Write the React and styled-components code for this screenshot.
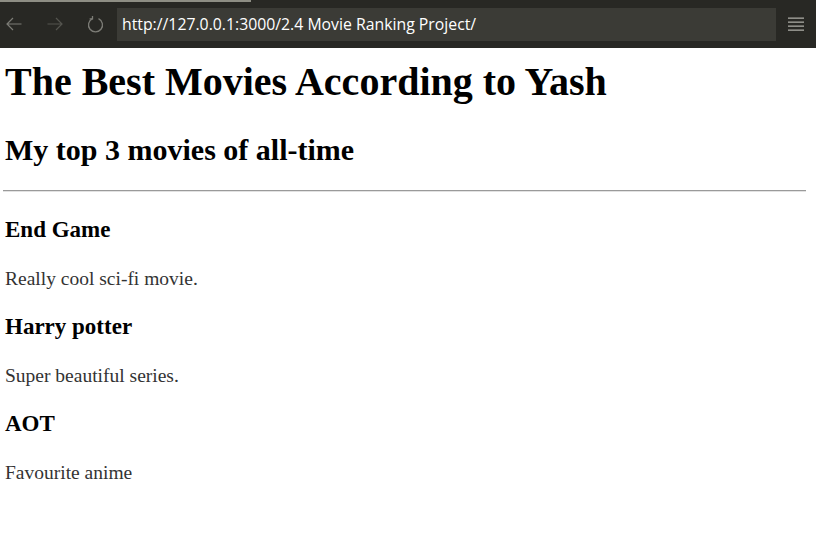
import React from 'react'
import styled, {createGlobalStyle} from 'styled-components'

const GlobalStyle = createGlobalStyle`
  html, body {
    margin: 0;
    padding: 0;
    background: #fff;
  }
`;

const Toolbar = styled.div`
  position: relative;
  display: flex;
  align-items: center;
  height: 48px;
  padding: 0 0 0 5px;
  background: #282824;
  box-sizing: border-box;
`;

const Progress = styled.div`
  position: absolute;
  top: 0;
  left: 0;
  width: 251px;
  height: 2px;
  background: #8e8e84;
`;

const NavGroup = styled.div`
  display: flex;
  align-items: center;
  gap: 24px;
  margin-right: 13px;
`;

const NavButton = styled.button`
  display: flex;
  align-items: center;
  justify-content: center;
  width: 17px;
  height: 20px;
  padding: 0;
  border: none;
  background: none;
  color: ${props => props.dim ? '#55554f' : '#7c7c76'};
`;

const UrlBar = styled.div`
  flex: 1;
  display: flex;
  align-items: center;
  height: 33px;
  padding-left: 5px;
  background: #3b3b36;
  color: #fff;
  font-family: "Open Sans", sans-serif;
  font-size: 15.8px;
  white-space: nowrap;
`;

const MenuButton = styled.div`
  display: flex;
  align-items: center;
  justify-content: center;
  width: 40px;
  height: 33px;
`;

const Page = styled.main`
  padding: 0 5px;
  font-family: "Liberation Serif", serif;
  color: #000;
`;

const Title = styled.h1`
  margin: 0;
  padding-top: 11px;
  font-size: 40px;
  line-height: 46px;
  font-weight: 700;
`;

const Subtitle = styled.h2`
  margin: 28px 0 0;
  font-size: 30px;
  line-height: 34px;
  font-weight: 700;
`;

const Rule = styled.hr`
  margin: 23px 5px 0 -2px;
  border: none;
  border-top: 1px solid #9a9a9a;
  border-bottom: 1px solid #e2e2e2;
`;

const Movie = styled.section`
  margin-top: ${props => props.first ? '25px' : '0'};
`;

const MovieName = styled.h3`
  margin: 0;
  font-size: 23px;
  line-height: 26px;
  font-weight: 700;
`;

const MovieNote = styled.p`
  margin: 24px 0 23px;
  font-size: 19.5px;
  line-height: 24px;
  color: #333;
`;

const movies = [
    {name: 'End Game', note: 'Really cool sci-fi movie.'},
    {name: 'Harry potter', note: 'Super beautiful series.'},
    {name: 'AOT', note: 'Favourite anime'}
]

const BackIcon = () => (
    <svg width="16" height="14" viewBox="0 0 16 14" fill="none" stroke="currentColor" strokeWidth="1.2">
        <path d="M15.5 7H1M7 1L1 7l6 6"/>
    </svg>
)

const ForwardIcon = () => (
    <svg width="16" height="14" viewBox="0 0 16 14" fill="none" stroke="currentColor" strokeWidth="1.2">
        <path d="M0.5 7H15M9 1l6 6-6 6"/>
    </svg>
)

const ReloadIcon = () => (
    <svg width="17" height="18" viewBox="0 0 17 18" fill="none" stroke="currentColor" strokeWidth="1.3">
        <path d="M11.5 3.6A7 7 0 1 1 5.5 3.6"/>
        <path d="M5.5 1v2.8H2.6"/>
    </svg>
)

const MenuIcon = () => (
    <svg width="16" height="14" viewBox="0 0 16 14">
        <rect x="0" y="0.5" width="16" height="1.3" fill="#a9a8a1"/>
        <rect x="0" y="4.5" width="16" height="1.3" fill="#a9a8a1"/>
        <rect x="0" y="8.5" width="16" height="1.3" fill="#a9a8a1"/>
        <rect x="0" y="12.5" width="16" height="1.3" fill="#a9a8a1"/>
    </svg>
)

export default function App() {
    return (
        <>
            <GlobalStyle/>
            <Toolbar>
                <Progress/>
                <NavGroup>
                    <NavButton><BackIcon/></NavButton>
                    <NavButton dim><ForwardIcon/></NavButton>
                    <NavButton><ReloadIcon/></NavButton>
                </NavGroup>
                <UrlBar>http://127.0.0.1:3000/2.4 Movie Ranking Project/</UrlBar>
                <MenuButton><MenuIcon/></MenuButton>
            </Toolbar>
            <Page>
                <Title>The Best Movies According to Yash</Title>
                <Subtitle>My top 3 movies of all-time</Subtitle>
                <Rule/>
                {movies.map((movie, index) => (
                    <Movie key={movie.name} first={index === 0}>
                        <MovieName>{movie.name}</MovieName>
                        <MovieNote>{movie.note}</MovieNote>
                    </Movie>
                ))}
            </Page>
        </>
    )
}
